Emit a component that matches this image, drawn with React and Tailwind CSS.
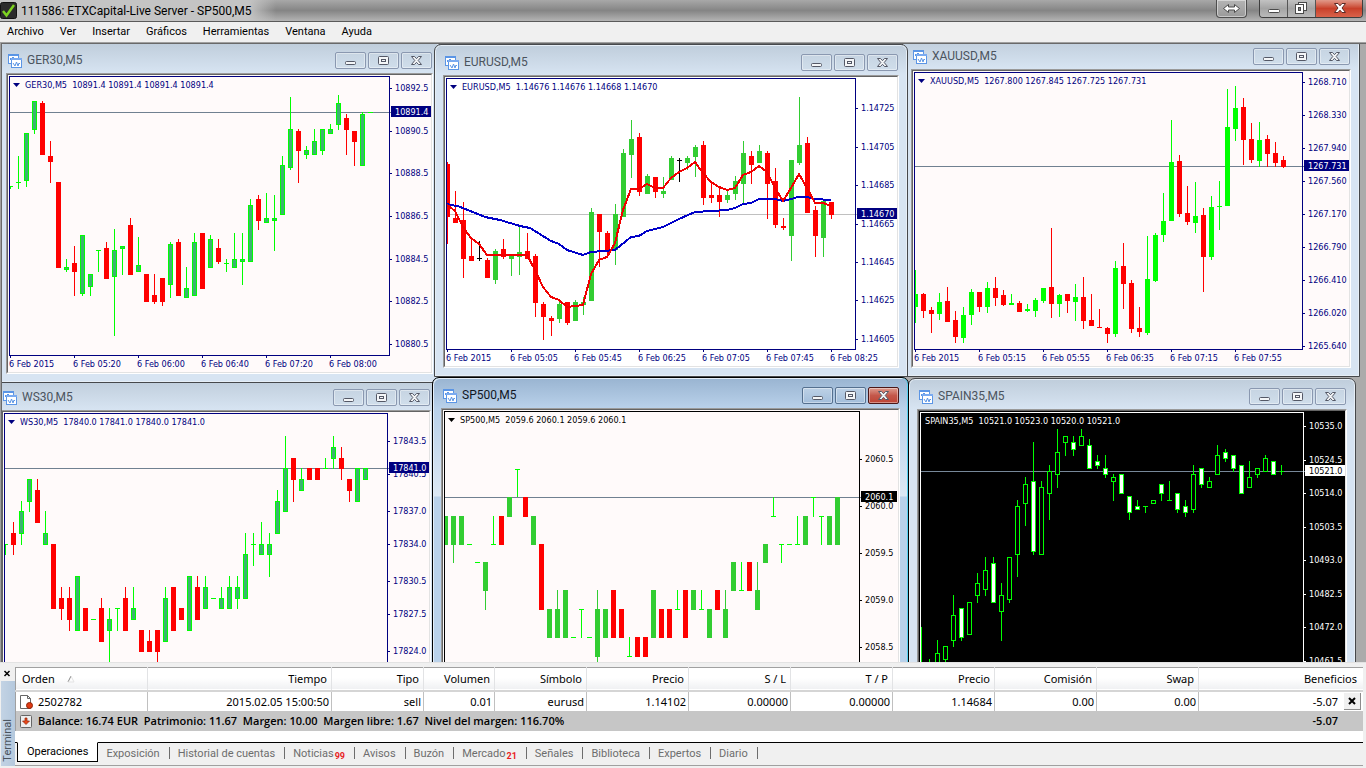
import React from 'react'
import clsx from 'clsx'

// Canvas coordinates of the inner corner of the desktop area
const DESK_X = 2
const DESK_Y = 44

// Candle rows: [kind, high, body top, body bottom, low]
// u = up, d = down, f = flat
const GER30 = [
  ['u', 186, 186, 187, 189], ['u', 156, 182, 183, 189], ['u', 133, 133, 181, 187], ['u', 101, 101, 130, 134],
  ['d', 101, 103, 155, 155], ['d', 141, 156, 162, 183], ['d', 182, 182, 268, 268], ['u', 259, 267, 270, 272],
  ['d', 246, 263, 272, 296], ['u', 235, 235, 294, 296], ['u', 274, 274, 287, 296], ['u', 250, 250, 251, 272],
  ['d', 242, 248, 279, 279], ['u', 229, 250, 277, 336], ['u', 246, 246, 249, 275], ['d', 218, 225, 275, 275],
  ['u', 237, 265, 272, 272], ['d', 274, 274, 302, 302], ['d', 274, 295, 302, 304], ['d', 278, 278, 302, 306],
  ['u', 242, 244, 285, 298], ['d', 239, 242, 296, 296], ['u', 267, 288, 298, 298], ['u', 233, 242, 296, 296],
  ['d', 233, 233, 289, 289], ['u', 235, 239, 268, 268], ['d', 239, 248, 262, 264], ['u', 259, 263, 264, 272],
  ['u', 233, 259, 268, 268], ['u', 233, 259, 262, 285], ['u', 199, 205, 262, 262], ['d', 195, 199, 221, 230],
  ['u', 193, 218, 223, 223], ['u', 195, 218, 221, 251], ['u', 156, 165, 215, 215], ['u', 97, 129, 168, 170],
  ['d', 129, 131, 151, 183], ['u', 146, 150, 155, 159], ['u', 129, 141, 155, 155], ['u', 129, 129, 151, 155],
  ['u', 124, 129, 134, 134], ['u', 95, 103, 125, 130], ['d', 114, 118, 130, 155], ['d', 131, 131, 142, 166],
  ['u', 112, 114, 166, 166], ['u', 112, 112, 113, 113],
]

const EURUSD = [
  ['d', 162, 164, 217, 244], ['d', 191, 218, 223, 223], ['d', 202, 220, 259, 278], ['d', 237, 256, 261, 261],
  ['f', 241, 258, 259, 261], ['d', 258, 260, 278, 278], ['u', 249, 251, 280, 284], ['d', 239, 249, 257, 259],
  ['u', 255, 255, 259, 276], ['u', 226, 252, 257, 275], ['d', 233, 251, 259, 259], ['d', 254, 256, 303, 317],
  ['d', 302, 304, 317, 340], ['d', 316, 318, 321, 336], ['u', 302, 304, 319, 323], ['d', 302, 302, 323, 325],
  ['u', 300, 302, 321, 321], ['u', 297, 302, 305, 315], ['u', 208, 212, 301, 301], ['d', 214, 214, 232, 267],
  ['d', 231, 233, 250, 256], ['u', 204, 214, 250, 265], ['u', 149, 153, 217, 217], ['u', 120, 139, 155, 178],
  ['d', 133, 137, 192, 196], ['u', 174, 176, 194, 194], ['d', 177, 177, 192, 198], ['u', 177, 191, 194, 198],
  ['u', 156, 158, 180, 180], ['f', 158, 160, 161, 182], ['u', 156, 158, 163, 170], ['u', 145, 147, 157, 177],
  ['d', 141, 145, 198, 205], ['d', 181, 195, 198, 203], ['d', 188, 195, 202, 217], ['u', 190, 195, 200, 203],
  ['u', 176, 181, 194, 200], ['u', 141, 153, 184, 204], ['d', 151, 156, 165, 184], ['u', 145, 151, 163, 163],
  ['d', 151, 153, 184, 219], ['d', 168, 181, 225, 228], ['d', 218, 226, 228, 230], ['u', 160, 160, 236, 261],
  ['u', 97, 145, 163, 165], ['d', 137, 143, 213, 213], ['d', 206, 210, 236, 257], ['u', 201, 201, 238, 257],
  ['d', 202, 202, 215, 219],
]

const XAUUSD = [
  ['u', 270, 294, 307, 323], ['d', 293, 294, 311, 318], ['d', 307, 310, 314, 333], ['u', 293, 302, 314, 320],
  ['d', 287, 301, 322, 322], ['d', 311, 320, 337, 343], ['u', 307, 315, 338, 343], ['u', 289, 292, 315, 325],
  ['d', 292, 292, 307, 312], ['u', 282, 288, 307, 313], ['d', 277, 288, 298, 306], ['d', 290, 295, 305, 306],
  ['u', 294, 303, 305, 305], ['d', 301, 303, 312, 312], ['u', 304, 309, 311, 312], ['u', 298, 300, 311, 317],
  ['u', 288, 288, 301, 303], ['d', 228, 287, 304, 318], ['u', 294, 295, 304, 317], ['d', 294, 294, 301, 313],
  ['u', 284, 297, 302, 321], ['d', 277, 297, 321, 329], ['d', 294, 320, 326, 326], ['d', 309, 327, 328, 328],
  ['d', 327, 328, 334, 343], ['u', 261, 268, 334, 337], ['d', 243, 266, 284, 309], ['d', 280, 283, 329, 333],
  ['d', 307, 328, 332, 337], ['u', 236, 279, 333, 335], ['u', 233, 235, 281, 282], ['u', 193, 221, 235, 242],
  ['u', 120, 162, 221, 221], ['d', 155, 161, 214, 217], ['d', 186, 213, 222, 225], ['u', 182, 216, 223, 233],
  ['d', 208, 215, 257, 292], ['u', 196, 207, 257, 260], ['u', 181, 206, 207, 230], ['u', 89, 127, 206, 206],
  ['u', 86, 108, 129, 141], ['d', 98, 107, 140, 165], ['d', 123, 139, 160, 163], ['u', 122, 140, 161, 167],
  ['d', 135, 139, 154, 167], ['d', 142, 153, 163, 167], ['d', 156, 160, 167, 168],
]

const WS30 = [
  ['u', 544, 544, 545, 555], ['d', 522, 533, 545, 555], ['u', 501, 511, 534, 545], ['u', 479, 479, 502, 512],
  ['d', 479, 490, 523, 523], ['u', 511, 533, 545, 545], ['d', 544, 544, 609, 609], ['d', 587, 598, 609, 620],
  ['d', 587, 598, 620, 631], ['u', 576, 576, 631, 631], ['d', 608, 608, 631, 631], ['u', 619, 619, 620, 620],
  ['d', 598, 608, 642, 642], ['u', 608, 619, 631, 664], ['u', 608, 608, 609, 631], ['d', 587, 598, 631, 631],
  ['u', 587, 608, 620, 620], ['d', 630, 630, 652, 652], ['d', 630, 641, 652, 652], ['d', 630, 630, 652, 664],
  ['u', 587, 598, 642, 642], ['d', 587, 587, 631, 631], ['d', 608, 608, 620, 620], ['u', 576, 576, 631, 631],
  ['d', 576, 587, 620, 620], ['u', 576, 587, 609, 609], ['u', 598, 598, 599, 599], ['u', 587, 598, 609, 609],
  ['u', 576, 587, 609, 609], ['u', 576, 587, 599, 609], ['u', 533, 554, 599, 599], ['u', 533, 544, 545, 566],
  ['u', 522, 544, 555, 555], ['u', 533, 544, 555, 577], ['u', 490, 501, 534, 534], ['u', 436, 468, 512, 512],
  ['d', 458, 458, 480, 502], ['u', 468, 479, 491, 491], ['d', 468, 468, 480, 480], ['d', 468, 468, 480, 480],
  ['u', 458, 468, 469, 469], ['u', 436, 447, 459, 469], ['d', 447, 458, 469, 480], ['d', 479, 479, 491, 502],
  ['u', 468, 468, 502, 502], ['u', 468, 468, 480, 480],
]

const SP500 = [
  ['u', 516, 516, 545, 545], ['u', 516, 516, 545, 563], ['u', 516, 516, 545, 545], ['f', 544, 544, 545, 545],
  ['f', 562, 562, 563, 563], ['u', 562, 562, 591, 610], ['f', 516, 544, 545, 545], ['d', 516, 516, 545, 545],
  ['u', 497, 497, 517, 517], ['f', 469, 469, 470, 497], ['d', 497, 497, 517, 517], ['u', 516, 516, 545, 545],
  ['d', 544, 544, 610, 610], ['u', 609, 609, 638, 638], ['u', 590, 609, 638, 638], ['u', 590, 590, 638, 638],
  ['f', 637, 637, 638, 638], ['f', 609, 609, 610, 638], ['f', 637, 637, 638, 638], ['u', 590, 609, 657, 664],
  ['u', 609, 609, 638, 638], ['d', 590, 590, 638, 638], ['d', 609, 609, 638, 638], ['f', 637, 656, 657, 657],
  ['d', 637, 637, 657, 657], ['d', 637, 637, 657, 657], ['u', 590, 590, 638, 638], ['d', 609, 609, 638, 638],
  ['d', 609, 609, 638, 638], ['f', 590, 609, 610, 610], ['d', 590, 590, 638, 638], ['u', 590, 590, 610, 610],
  ['f', 590, 609, 610, 610], ['u', 609, 609, 638, 638], ['d', 590, 590, 610, 610], ['u', 590, 609, 638, 638],
  ['u', 562, 562, 591, 591], ['f', 562, 590, 591, 591], ['d', 562, 562, 591, 591], ['u', 562, 590, 610, 610],
  ['u', 544, 544, 563, 563], ['f', 497, 516, 517, 517], ['f', 544, 544, 545, 563], ['f', 544, 544, 545, 545],
  ['f', 516, 544, 545, 545], ['u', 516, 516, 545, 545], ['f', 497, 497, 498, 517], ['f', 516, 516, 517, 545],
  ['u', 516, 516, 545, 545], ['u', 497, 497, 545, 545],
]

const SPAIN35 = [
  ['u', 627, 662, 664, 664], ['u', 659, 664, 668, 668], ['u', 640, 653, 668, 668], ['u', 646, 646, 660, 664],
  ['u', 595, 615, 641, 647], ['d', 608, 608, 638, 641], ['u', 602, 602, 635, 635], ['u', 573, 583, 596, 603],
  ['u', 557, 570, 590, 596], ['d', 557, 563, 603, 603], ['u', 583, 595, 612, 641], ['u', 557, 557, 600, 603],
  ['u', 500, 506, 555, 577], ['u', 477, 484, 504, 526], ['d', 442, 481, 552, 555], ['u', 481, 487, 555, 555],
  ['u', 465, 471, 494, 520], ['u', 429, 452, 475, 488], ['u', 436, 436, 443, 456], ['d', 436, 442, 450, 456],
  ['u', 429, 436, 446, 446], ['d', 439, 445, 469, 469], ['d', 455, 461, 466, 469], ['d', 455, 468, 475, 478],
  ['u', 474, 477, 482, 501], ['d', 474, 474, 494, 494], ['d', 496, 496, 513, 520], ['d', 500, 506, 510, 510],
  ['u', 506, 506, 507, 513], ['u', 500, 500, 504, 504], ['d', 484, 484, 494, 501], ['u', 481, 500, 501, 501],
  ['d', 493, 493, 510, 513], ['d', 500, 506, 513, 517], ['u', 465, 474, 510, 513], ['d', 468, 468, 485, 488],
  ['u', 477, 481, 488, 488], ['u', 445, 455, 475, 475], ['d', 449, 452, 459, 462], ['d', 455, 455, 469, 472],
  ['d', 465, 465, 494, 494], ['u', 461, 477, 488, 488], ['u', 468, 468, 475, 478], ['u', 455, 458, 472, 472],
  ['d', 461, 461, 475, 475], ['u', 465, 471, 472, 475],
]

const RED = { line: '#ff0000', fill: '#ff0000' }
const LIME = { line: '#00ff00', fill: '#00ff00' }
const SEA = { line: '#00ff00', fill: '#3cb371' }
const GREEN = { line: '#32cd32', fill: '#32cd32' }
const BLACK = { line: '#000000', fill: '#000000' }

const WINDOWS = [
  {
    name: 'WS30,M5', quote: '17840.0 17841.0 17840.0 17841.0',
    x: -8, y: 379, w: 448, h: 330, right: 387, bottom: 690,
    bg: '#fffafa', ink: '#000080', line: '#708090', badgeInk: '#ffffff', badgeW: 41,
    candles: WS30, u: SEA, d: RED, f: BLACK,
    prices: [['17843.5', 441], ['17840.5', 474], ['17837.0', 511], ['17834.0', 544], ['17830.5', 581], ['17827.5', 614], ['17824.0', 651]],
    last: ['17841.0', 468], times: [],
  },
  {
    name: 'GER30,M5', quote: '10891.4 10891.4 10891.4 10891.4',
    x: -3, y: 42, w: 445, h: 341, right: 389, bottom: 355,
    bg: '#fffafa', ink: '#000080', line: '#708090', badgeInk: '#ffffff', badgeW: 41,
    candles: GER30, u: SEA, d: RED, f: BLACK,
    prices: [['10892.5', 88], ['10890.5', 131], ['10888.5', 173], ['10886.5', 216], ['10884.5', 259], ['10882.5', 301], ['10880.5', 344]],
    last: ['10891.4', 112],
    times: ['6 Feb 2015', '6 Feb 05:20', '6 Feb 06:00', '6 Feb 06:40', '6 Feb 07:20', '6 Feb 08:00'],
  },
  {
    name: 'XAUUSD,M5', quote: '1267.800 1267.845 1267.725 1267.731',
    x: 902, y: 38, w: 458, h: 339, right: 1302, bottom: 349,
    bg: '#fffafa', ink: '#000080', line: '#708090', badgeInk: '#ffffff', badgeW: 46,
    candles: XAUUSD, u: LIME, d: RED, f: BLACK,
    prices: [['1268.710', 82], ['1268.330', 115], ['1267.940', 148], ['1267.560', 181], ['1267.170', 214], ['1266.790', 247], ['1266.410', 280], ['1266.020', 313], ['1265.640', 346]],
    last: ['1267.731', 166],
    times: ['6 Feb 2015', '6 Feb 05:15', '6 Feb 05:55', '6 Feb 06:35', '6 Feb 07:15', '6 Feb 07:55'],
  },
  {
    name: 'EURUSD,M5', quote: '1.14676 1.14676 1.14668 1.14670',
    x: 434, y: 44, w: 474, h: 333, right: 855, bottom: 349,
    bg: '#ffffff', ink: '#000080', line: '#c0c0c0', badgeInk: '#ffffff', badgeW: 41,
    candles: EURUSD, u: GREEN, d: RED, f: BLACK,
    prices: [['1.14725', 108], ['1.14705', 147], ['1.14685', 185], ['1.14665', 224], ['1.14645', 262], ['1.14625', 300], ['1.14605', 339]],
    last: ['1.14670', 214],
    times: ['6 Feb 2015', '6 Feb 05:05', '6 Feb 05:45', '6 Feb 06:25', '6 Feb 07:05', '6 Feb 07:45', '6 Feb 08:25'],
    averages: [
      ['#0000c8', '447,204 450,205 458,206 485,217 500,220 520,226 530,228 551,241 559,244 567,250 583,255 591,252 615,250 631,237 639,236 647,231 663,227 679,219 695,212 727,210 735,208 743,204 751,203 759,199 775,199 783,201 791,199 798,197 807,197 815,199 831,200'],
      ['#f00000', '447,205 450,207 455,211 463,227 471,238 479,244 487,255 527,255 535,270 543,287 551,297 559,300 567,307 575,306 583,305 591,274 599,260 607,257 615,243 623,210 631,189 639,189 647,184 655,188 663,188 671,178 679,172 687,168 695,162 703,173 711,182 719,187 727,190 735,188 743,175 751,172 759,166 767,172 775,188 783,201 791,188 799,174 807,188 815,203 823,203 831,206'],
    ],
  },
  {
    name: 'SPAIN35,M5', quote: '10521.0 10523.0 10520.0 10521.0', plain: true,
    x: 908, y: 378, w: 448, h: 330, right: 1303, bottom: 690,
    bg: '#000000', ink: '#ffffff', line: '#778899', badgeInk: '#000000', badgeW: 41,
    candles: SPAIN35, u: { line: '#00ff00', fill: '#000000' }, d: { line: '#00ff00', fill: '#ffffff' }, f: LIME,
    prices: [['10535.0', 426], ['10524.5', 460], ['10514.0', 493], ['10503.5', 527], ['10493.0', 560], ['10482.5', 594], ['10472.0', 627], ['10461.5', 661]],
    last: ['10521.0', 471], times: [],
  },
  {
    name: 'SP500,M5', quote: '2059.6 2060.1 2059.6 2060.1', active: true,
    x: 432, y: 377, w: 477, h: 331, right: 859, bottom: 690,
    bg: '#fffafa', ink: '#000000', line: '#708090', badgeInk: '#ffffff', badgeW: 36,
    candles: SP500, u: GREEN, d: RED, f: LIME,
    prices: [['2060.5', 459], ['2060.0', 506], ['2059.5', 553], ['2059.0', 600], ['2058.5', 647]],
    last: ['2060.1', 497], times: [],
  },
]

function Candle({ x, row, colors }) {
  const [, high, top, bottom, low] = row
  return (
    <g>
      <rect x={x} y={high} width="1" height={Math.max(low - high, 1)} fill={colors.line} />
      <rect x={x - 2} y={top} width="5" height={bottom - top} fill={colors.line} />
      {bottom - top > 2 && colors.fill !== colors.line && (
        <rect x={x - 1} y={top + 1} width="3" height={bottom - top - 2} fill={colors.fill} />
      )}
    </g>
  )
}

function Chart({ win }) {
  const left = win.x + 12
  const top = win.y + 34
  const width = win.w - 22
  const height = win.h - 44
  const plotW = win.right - left
  const plotH = win.bottom - top
  const [lastPrice, lastY] = win.last

  return (
    <svg
      width={width}
      height={height}
      viewBox={`${win.x + 11} ${win.y + 33} ${width} ${height}`}
      shapeRendering="crispEdges"
      className="block font-['DejaVu_Sans_Condensed','DejaVu_Sans',sans-serif] text-[9px]"
    >
      <rect x={win.x + 11} y={win.y + 33} width={width} height={height} fill={win.bg} />
      <rect x={left} y={lastY} width={plotW + 3} height="1" fill={win.line} />
      <svg x={left} y={top} width={plotW} height={plotH} viewBox={`${left} ${top} ${plotW} ${plotH}`}>
        {win.candles.map((row, i) => (
          <Candle key={i} x={left + 1 + i * 8} row={row} colors={win[row[0]]} />
        ))}
        {(win.averages || []).map(([color, points]) => (
          <polyline key={color} points={points} fill="none" stroke={color} strokeWidth="2" />
        ))}
      </svg>
      <rect x={left + 0.5} y={top + 0.5} width={plotW} height={plotH} fill="none" stroke={win.ink} />

      {!win.plain && <path d={`M${left + 4} ${top + 7}h7l-3.5 4z`} fill={win.ink} shapeRendering="auto" />}
      <text x={left + (win.plain ? 5 : 16)} y={top + 12} fill={win.ink}>
        {win.name + '\u00a0\u00a0' + win.quote}
      </text>

      {win.prices.map(([price, y]) => (
        <g key={price} fill={win.ink}>
          <rect x={win.right} y={y} width="3" height="1" />
          <text x={win.right + 6} y={y + 3}>{price}</text>
        </g>
      ))}
      <rect x={win.right + 2} y={lastY - 6} width={win.badgeW} height="11" fill={win.ink} />
      <text x={win.right + 6} y={lastY + 3} fill={win.badgeInk}>{lastPrice}</text>

      {win.times.map((time, i) => (
        <g key={time} fill={win.ink}>
          <rect x={left + 1 + i * 64} y={win.bottom} width="1" height="3" />
          <text x={left + i * 64} y={win.bottom + 12}>{time}</text>
        </g>
      ))}
    </svg>
  )
}

function ChartIcon() {
  return (
    <svg width="15" height="15" viewBox="0 0 15 15" fill="none" shapeRendering="crispEdges" className="shrink-0">
      <rect x="0.5" y="1.5" width="10" height="9" fill="#fff" stroke="#5b95e5" />
      <path d="M0 1h11v2H0z" fill="#5b95e5" />
      <path d="M2 7l1-2 1 2 1-3 1 3" stroke="#5b95e5" />
      <rect x="3.5" y="5.5" width="10" height="9" fill="#fff" stroke="#5b95e5" />
      <path d="M3 5h11v2H3z" fill="#7aaaf0" />
      <path d="M5 10l2 3 1.500-4 1.500 4 1-3 1 1" stroke="#5b95e5" shapeRendering="auto" />
    </svg>
  )
}

const GLYPHS = {
  Minimizar: <rect x="10.500" y="9.500" width="10" height="3" rx="1" />,
  Restaurar: (
    <>
      <rect x="10.500" y="4.500" width="10" height="8" rx="1" />
      <rect x="13.500" y="7.500" width="4" height="2" />
    </>
  ),
  Cerrar: <path d="M10.500 4.500h3l2 2.200 2-2.200h3l-3.300 4 3.300 4h-3l-2-2.200-2 2.200h-3l3.300-4z" />,
}

function WindowButton({ label, active }) {
  const red = active && label === 'Cerrar'
  return (
    <button
      aria-label={label}
      className={clsx(
        'h-[17px] w-[31px] rounded-[2px] border shadow-[inset_0_0_0_1px_rgba(255,255,255,0.4)]',
        red && 'border-[#4c1717] bg-linear-to-b from-[#dc9a8e] via-[#c4574a] to-[#bd4434]',
        active && !red && 'border-[#55708f] bg-linear-to-b from-[#bdd1e6] to-[#a3bedb]',
        !active && 'border-[#8a98b0] bg-linear-to-b from-[#c6d4e2] to-[#d0deeb]'
      )}
    >
      <svg width="29" height="15" viewBox="1 1 29 15" fill="#f4f6f8" stroke="#545866">
        {GLYPHS[label]}
      </svg>
    </button>
  )
}

function ChartWindow({ win }) {
  return (
    <section
      className={clsx(
        'absolute flex flex-col rounded-t-[7px] border px-2 pb-2',
        win.active
          ? 'border-black bg-[linear-gradient(#99b4d1_0,#b9d1ea_30px,#dce8f4_118px,#b9d1ea_119px)] shadow-[inset_-1px_0_0_#55d0f0,inset_1px_1px_0_#e4eef8]'
          : 'border-[#46484b] bg-[linear-gradient(#bfcddb_0,#d7e4f2_30px)] shadow-[inset_0_0_0_1px_#e6eef6]'
      )}
      style={{ left: win.x - DESK_X, top: win.y - DESK_Y, width: win.w, height: win.h }}
    >
      <header className="flex h-[30px] shrink-0 items-center gap-1 pt-1 pr-px pl-0.5">
        <ChartIcon />
        <h2 className={clsx('flex-1 text-[12px] leading-4', win.active ? 'text-[#10161e]' : 'text-[#4b545e]')}>
          {win.name}
        </h2>
        <div className="flex gap-0.5">
          <WindowButton label="Minimizar" active={win.active} />
          <WindowButton label="Restaurar" active={win.active} />
          <WindowButton label="Cerrar" active={win.active} />
        </div>
      </header>
      <div className="border border-t-[#9a9a9a] border-r-white border-b-white border-l-[#9a9a9a]">
        <div className="border border-t-[#646464] border-r-[#e3e3e3] border-b-[#e3e3e3] border-l-[#646464]">
          <Chart win={win} />
        </div>
      </div>
    </section>
  )
}

function TitleBar() {
  return (
    <header className="flex h-[22px] shrink-0 items-center border-b border-[#5a5a5a] bg-linear-to-b from-[#a8a8a8] via-[#858585] to-[#b4b4b4]">
      <div className="flex h-full items-center gap-1 bg-linear-to-r from-[#c4c4c4] from-90% to-transparent pr-6">
        <svg width="17" height="17" viewBox="0 0 17 17">
          <rect width="16" height="16" x="0.500" y="0.500" rx="2" fill="#2b2b2b" stroke="#111" />
          <path d="M3 9l3.500 4.500L14 3" fill="none" stroke="#7ed321" strokeWidth="2.500" />
        </svg>
        <h1 className="text-[12px] leading-4 text-black">111586: ETXCapital-Live Server - SP500,M5</h1>
      </div>
      <div className="ml-auto flex h-full items-start pr-[3px]">
        <button aria-label="Mover" className="mr-3 h-[18px] w-[31px] rounded-b-[4px] border border-t-0 border-[#4e4e4e] bg-linear-to-b from-[#b4b4b4] to-[#9a9a9a] shadow-[inset_0_0_0_1px_rgba(255,255,255,0.45)]">
          <svg width="29" height="17" viewBox="0 0 29 17" fill="#fff" stroke="#4a4a4a">
            <path d="M6.500 8.500l5-4v2.500h6V4.500l5 4-5 4V10h-6v2.500z" />
          </svg>
        </button>
        <div className="flex h-[18px] overflow-hidden rounded-b-[4px] border border-t-0 border-[#3e3e3e]">
          <button aria-label="Minimizar" className="w-7 border-r border-[#555] bg-linear-to-b from-[#c2c2c2] via-[#a4a4a4] to-[#bababa]">
            <svg width="27" height="17" viewBox="0 0 27 17" fill="#fff" stroke="#4a4a4a">
              <rect x="8.500" y="9.500" width="11" height="3" rx="1" />
            </svg>
          </button>
          <button aria-label="Restaurar" className="w-7 border-r border-[#555] bg-linear-to-b from-[#c2c2c2] via-[#a4a4a4] to-[#bababa]">
            <svg width="27" height="17" viewBox="0 0 27 17" fill="#fff" stroke="#4a4a4a">
              <rect x="10.500" y="2.500" width="8" height="8" />
              <rect x="7.500" y="4.500" width="8" height="9" />
              <rect x="10.500" y="7.500" width="2" height="3" fill="#888" />
            </svg>
          </button>
          <button aria-label="Cerrar" className="w-[46px] bg-linear-to-b from-[#e0998a] via-[#c8402a] to-[#d9624a]">
            <svg width="46" height="17" viewBox="0 0 46 17" fill="#fff" stroke="#5a2a26">
              <path d="M18.500 3.500h3.500l2 2.300 2-2.300h3.500l-3.500 4.500 3.500 4.500H26l-2-2.300-2 2.300h-3.500l3.500-4.500z" />
            </svg>
          </button>
        </div>
      </div>
    </header>
  )
}

const MENU = ['Archivo', 'Ver', 'Insertar', 'Gráficos', 'Herramientas', 'Ventana', 'Ayuda']

const TABS = [
  ['Exposición'], ['Historial de cuentas'], ['Noticias', 99], ['Avisos'], ['Buzón'],
  ['Mercado', 21], ['Señales'], ['Biblioteca'], ['Expertos'], ['Diario'],
]

const COLUMNS = [
  ['Tiempo', '2015.02.05 15:00:50', 'w-[184px]'],
  ['Tipo', 'sell', 'w-[92px]'],
  ['Volumen', '0.01', 'w-[71px]'],
  ['Símbolo', 'eurusd', 'w-[92px]'],
  ['Precio', '1.14102', 'w-[102px]'],
  ['S / L', '0.00000', 'w-[102px]'],
  ['T / P', '0.00000', 'w-[102px]'],
  ['Precio', '1.14684', 'w-[102px]'],
  ['Comisión', '0.00', 'w-[102px]'],
  ['Swap', '0.00', 'w-[102px]'],
]

function Terminal() {
  return (
    <section className="flex shrink-0 border-t border-[#e3e3e3] bg-[#f0f0f0] pt-1 pr-[3px] pb-0.5 text-[11px] leading-4">
      <aside className="flex w-[15px] flex-col items-center pl-px">
        <button aria-label="Cerrar terminal" className="h-[14px] w-full">
          <svg width="13" height="14" viewBox="0 0 13 14" stroke="#000" strokeWidth="1.500">
            <path d="M3.500 4l5 5m0-5l-5 5" />
          </svg>
        </button>
        <div className="flex w-full flex-1 items-end justify-center bg-linear-to-r from-[#c3d3e4] to-[#b4c8dd] pb-1">
          <span className="rotate-180 text-[11px] leading-[14px] text-[#4a545e] [writing-mode:vertical-rl]">Terminal</span>
        </div>
      </aside>

      <div className="min-w-0 flex-1 border-b border-[#a0a0a0]">
        <table className="w-full table-fixed border-t border-l border-[#a0a0a0] bg-white font-['Noto_Sans',sans-serif]">
          <thead>
            <tr className="h-6 border-b-2 border-[#d5d5d5] bg-linear-to-b from-white from-50% to-[#f0f1f3]">
              <th className="w-[132px] border-r border-[#e2e3e5] pl-1.5 text-left font-normal">
                <span className="flex items-center gap-3">
                  Orden
                  <svg width="8" height="8" viewBox="0 0 8 8" fill="none">
                    <path d="M1 7l3-6" stroke="#888" />
                    <path d="M4 1l3 6H1" stroke="#e4e4e4" />
                  </svg>
                </span>
              </th>
              {COLUMNS.map(([label, , width], i) => (
                <th key={i} className={clsx(width, 'border-r border-[#e2e3e5] pr-1 text-right font-normal')}>{label}</th>
              ))}
              <th className="pr-1.5 text-right font-normal">Beneficios</th>
            </tr>
          </thead>
          <tbody>
            <tr className="h-5">
              <td className="border-r border-[#c0c0c0] pl-0.5">
                <span className="flex items-center gap-1">
                  <svg width="16" height="16" viewBox="0 0 16 16">
                    <path d="M2.500 1.500h7l3 3v10h-10z" fill="#fff" stroke="#666" />
                    <path d="M9.500 1.500v3h3" fill="none" stroke="#666" />
                    <circle cx="11.500" cy="11.500" r="3" fill="#e03a12" stroke="#8f2408" />
                  </svg>
                  2502782
                </span>
              </td>
              {COLUMNS.map(([, value], i) => (
                <td key={i} className="border-r border-[#c0c0c0] pr-0.5 text-right">{value}</td>
              ))}
              <td className="pr-0.5">
                <span className="flex items-center justify-end gap-1.5">
                  -5.07
                  <button aria-label="Cerrar orden" className="h-[17px] w-[17px] border-r border-b border-[#8c8c8c] bg-[#f0f0f0]">
                    <svg width="16" height="16" viewBox="0 0 16 16" stroke="#000" strokeWidth="2">
                      <path d="M5 5l6 6m0-6l-6 6" />
                    </svg>
                  </button>
                </span>
              </td>
            </tr>
            <tr className="h-5 bg-[#c6c6c6] font-['Open_Sans',sans-serif] font-semibold">
              <td colSpan={11} className="pl-0.5">
                <span className="flex items-center gap-1">
                  <svg width="16" height="16" viewBox="0 0 16 16">
                    <rect x="2.500" y="2.500" width="11" height="12" rx="1" fill="#eee" stroke="#666" />
                    <path d="M7 5h2v3h2.500L8 11.500 4.500 8H7z" fill="#e8481a" stroke="#8f2408" strokeWidth="0.700" />
                  </svg>
                  <span className="whitespace-pre">Balance: 16.74 EUR  Patrimonio: 11.67  Margen: 10.00  Margen libre: 1.67  Nivel del margen: 116.70%</span>
                </span>
              </td>
              <td className="pr-[25px] text-right">-5.07</td>
            </tr>
          </tbody>
        </table>

        <div className="h-[11px] bg-white" />
        <nav className="flex h-[23px] items-start border-t border-black">
          <button className="-mt-px ml-0.5 h-5 border border-t-white border-black bg-white px-[9px] leading-4 text-black">
            Operaciones
          </button>
          {TABS.map(([label, count]) => (
            <React.Fragment key={label}>
              <button className="pt-[3px] pr-[9px] pl-2 text-[#6d6d6d]">
                {label}
                {count && <span className="ml-px align-[-2px] text-[9px] leading-none font-bold text-[#e81c24]">{count}</span>}
              </button>
              <span className="mt-1 h-3 w-px bg-[#6d6d6d]" />
            </React.Fragment>
          ))}
        </nav>
      </div>
    </section>
  )
}

function App() {
  return (
    <div className="flex h-screen flex-col overflow-hidden bg-[#f0f0f0] font-['Roboto',sans-serif] text-black">
      <TitleBar />
      <nav className="flex h-5 shrink-0 items-center gap-4 bg-[#f0f0f0] pl-[7px] text-[11px]">
        {MENU.map((item) => (
          <button key={item}>{item}</button>
        ))}
      </nav>
      <main className="flex min-h-0 flex-1 border-t border-l border-[#a0a0a0]">
        <div className="relative flex-1 overflow-hidden border-t border-l border-[#696969] bg-[#ababab]">
          {WINDOWS.map((win) => (
            <ChartWindow key={win.name} win={win} />
          ))}
        </div>
      </main>
      <Terminal />
    </div>
  )
}

export default App
